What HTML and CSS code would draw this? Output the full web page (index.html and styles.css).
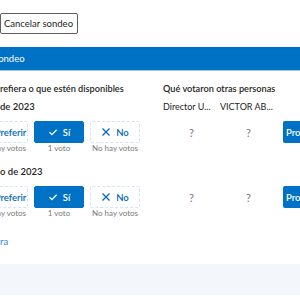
FILE: index.html
```html
<!DOCTYPE html>
<html lang="es">
<head>
  <meta charset="UTF-8">
  <title>Sondeo</title>
  <link rel="stylesheet" href="styles.css">
</head>
<body>
  <div class="page">
    <div class="toolbar">
      <button class="btn-cancel">Cancelar sondeo</button>
    </div>

    <div class="banner">
      <span class="banner-title">Sondeo</span>
    </div>

    <div class="poll">
      <div class="intro">refiera o que estén disponibles</div>
      <div class="others">Qué votaron otras personas</div>

      <div class="date">de 2023</div>
      <div class="name">Director U...</div>
      <div class="name">VICTOR AB...</div>
      <div></div>

      <div class="choices">
        <div class="choice">
          <button class="vote">
            <svg width="10" height="10" viewBox="0 0 10 10"><path d="M5 1l1.2 2.6 2.8.3-2.1 1.9.6 2.8L5 7.2 2.5 8.6l.6-2.8L1 3.9l2.8-.3z" fill="none" stroke="#0067b8" stroke-width="1"/></svg>
            Preferir
          </button>
          <span class="count">No hay votos</span>
        </div>
        <div class="choice">
          <button class="vote vote-on">
            <svg width="10" height="10" viewBox="0 0 10 10"><path d="M1.5 5.2l2.4 2.4L8.6 2.8" fill="none" stroke="#fff" stroke-width="1.3"/></svg>
            Sí
          </button>
          <span class="count">1 voto</span>
        </div>
        <div class="choice">
          <button class="vote">
            <svg width="10" height="10" viewBox="0 0 10 10"><path d="M1.5 1.5l7 7M8.5 1.5l-7 7" fill="none" stroke="#0067b8" stroke-width="1.2"/></svg>
            No
          </button>
          <span class="count">No hay votos</span>
        </div>
      </div>
      <div class="mark">?</div>
      <div class="mark">?</div>
      <div class="pro-cell"><button class="btn-pro">Programar</button></div>

      <div class="date date-next">o de 2023</div>
      <div></div>
      <div></div>
      <div></div>

      <div class="choices">
        <div class="choice">
          <button class="vote">
            <svg width="10" height="10" viewBox="0 0 10 10"><path d="M5 1l1.2 2.6 2.8.3-2.1 1.9.6 2.8L5 7.2 2.5 8.6l.6-2.8L1 3.9l2.8-.3z" fill="none" stroke="#0067b8" stroke-width="1"/></svg>
            Preferir
          </button>
          <span class="count">No hay votos</span>
        </div>
        <div class="choice">
          <button class="vote vote-on">
            <svg width="10" height="10" viewBox="0 0 10 10"><path d="M1.5 5.2l2.4 2.4L8.6 2.8" fill="none" stroke="#fff" stroke-width="1.3"/></svg>
            Sí
          </button>
          <span class="count">1 voto</span>
        </div>
        <div class="choice">
          <button class="vote">
            <svg width="10" height="10" viewBox="0 0 10 10"><path d="M1.5 1.5l7 7M8.5 1.5l-7 7" fill="none" stroke="#0067b8" stroke-width="1.2"/></svg>
            No
          </button>
          <span class="count">No hay votos</span>
        </div>
      </div>
      <div class="mark">?</div>
      <div class="mark">?</div>
      <div class="pro-cell"><button class="btn-pro">Programar</button></div>
    </div>

    <a class="more" href="#">ra</a>

    <div class="footer"></div>
  </div>
</body>
</html>
```

FILE: styles.css
```css
* {
  box-sizing: border-box;
}
body {
  margin: 0;
  width: 300px;
  height: 300px;
  overflow: hidden;
  background: #fff;
  font-family: 'Lato', sans-serif;
  font-size: 9.5px;
  color: #252423;
}
.page {
  width: 300px;
  overflow: hidden;
}
.toolbar {
  padding-top: 13px;
}
.btn-cancel {
  height: 21px;
  margin: 0;
  padding: 0 4px 0 3px;
  border: 1px solid #605e5c;
  border-radius: 2px;
  background: #fff;
  font-family: inherit;
  font-size: 9.5px;
  color: #252423;
}
.banner {
  margin-top: 13px;
  height: 24px;
  background: #0072c6;
  border-bottom: 1px solid #9cc4e8;
  display: flex;
  align-items: center;
  overflow: hidden;
}
.banner-title {
  margin-left: -7px;
  color: #fff;
  font-size: 9.5px;
}
.poll {
  display: grid;
  grid-template-columns: 163px 57px 57px 1fr;
  margin-top: 11px;
}
.intro, .others {
  line-height: 14px;
  font-weight: 600;
  font-size: 9.2px;
}
.others {
  grid-column: 2 / 5;
}
.date {
  margin-top: 4px;
  line-height: 14px;
  font-weight: 600;
  font-size: 9.5px;
}
.date-next {
  margin-top: 12px;
}
.name {
  margin-top: 4px;
  padding-right: 4px;
  line-height: 14px;
  font-size: 9px;
  white-space: nowrap;
  overflow: hidden;
}
.name:first-of-type {
  padding-left: 2px;
}
.choices {
  display: flex;
  gap: 6px;
  margin-left: -22px;
  margin-top: 7px;
}
.choice {
  display: flex;
  flex-direction: column;
  align-items: center;
}
.vote {
  width: 50px;
  height: 22px;
  margin: 0;
  padding: 0;
  display: flex;
  align-items: center;
  justify-content: center;
  gap: 5px;
  border: 1px dashed #d5e4f3;
  border-radius: 2px;
  background: #fff;
  font-family: inherit;
  font-size: 9.5px;
  font-weight: 600;
  color: #0067b8;
}
.vote-on {
  border: 1px solid #0072c6;
  background: #0072c6;
  color: #fff;
}
.count {
  margin-top: 1px;
  line-height: 9px;
  font-size: 8px;
  color: #797775;
  white-space: nowrap;
}
.mark {
  margin-top: 7px;
  height: 22px;
  display: flex;
  align-items: center;
  justify-content: center;
  font-size: 11px;
  color: #797775;
}
.pro-cell {
  margin-top: 7px;
  padding-left: 6px;
}
.btn-pro {
  height: 22px;
  margin: 0;
  padding: 0 6px 0 3px;
  border: none;
  border-radius: 2px;
  background: #0072c6;
  color: #fff;
  font-family: inherit;
  font-size: 9.5px;
  font-weight: 600;
  white-space: nowrap;
}
.more {
  display: block;
  margin-top: 17px;
  line-height: 14px;
  font-size: 9.5px;
  color: #2b88d8;
  text-decoration: none;
}
.footer {
  margin-top: 15px;
  height: 31px;
  background: #f3f7fc;
}
```
